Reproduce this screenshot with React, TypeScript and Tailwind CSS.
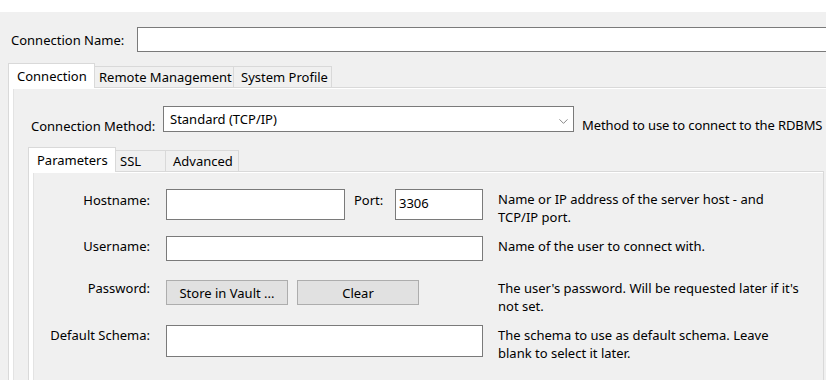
import { ChevronDown } from "lucide-react";

const field = "bg-white border border-[#7a7a7a] shrink-0";

const Tab = ({ label, active, w }: { label: string; active?: boolean; w: string }) => (
  <div
    className={
      active
        ? `${w} h-[25px] bg-white border-l border-t border-r border-[#d9d9d9] -mb-px relative z-10 pl-[8px] pt-[4px] whitespace-nowrap`
        : `${w} h-[21px] bg-[#f0f0f0] border-t border-r border-[#d9d9d9] pt-[2px] whitespace-nowrap`
    }
  >
    {label}
  </div>
);

const Desc = ({ children }: { children: React.ReactNode }) => (
  <div className="ml-[15px] w-[320px] mt-[1px] leading-[18px] whitespace-nowrap">{children}</div>
);

const App = () => {
  return (
    <div
      className="w-[826px] h-[380px] overflow-hidden bg-[#f0f0f0] text-[13px] leading-[16px] text-black"
      style={{ fontFamily: '"Noto Sans", sans-serif' }}
    >
      <div className="h-[12px] bg-white" />

      {/* connection name */}
      <div className="flex items-center mt-[15px] h-[25px]">
        <div className="w-[137px] shrink-0 pl-[11px] whitespace-nowrap">Connection Name:</div>
        <div className={`${field} w-[720px] h-[25px]`} />
      </div>

      {/* outer tabs */}
      <div className="flex items-end mt-[11px] ml-[8px]">
        <Tab label="Connection" active w="w-[87px]" />
        <Tab label="Remote Management" w="w-[139px] pl-[4px]" />
        <Tab label="System Profile" w="w-[98px] pl-[7px]" />
      </div>

      <div className="ml-[8px] w-[840px] h-[300px] border-l border-t border-[#d9d9d9]">
        <div className="h-full border-l-[4px] border-t-[1px] border-white">
          <div className="h-full border-l border-[#e3e3e3] bg-[#f0f0f0] pt-[17px]">
            {/* connection method */}
            <div className="flex items-start h-[25px]">
              <div className="w-[149px] shrink-0 pl-[17px] mt-[12px] whitespace-nowrap">Connection Method:</div>
              <div className={`${field} w-[411px] h-[26px] flex items-start justify-between pl-[6px] pr-[2px] pt-[4px]`}>
                <span>Standard (TCP/IP)</span>
                <ChevronDown className="w-[15px] h-[15px] mt-[3px] text-[#606060]" strokeWidth={1.2} />
              </div>
              <div className="pl-[8px] mt-[11px] whitespace-nowrap tracking-[-0.1px]">
                Method to use to connect to the RDBMS
              </div>
            </div>

            {/* inner tabs */}
            <div className="flex items-end mt-[16px] ml-[14px]">
              <Tab label="Parameters" active w="w-[88px]" />
              <Tab label="SSL" w="w-[50px] pl-[4px]" />
              <Tab label="Advanced" w="w-[73px] pl-[7px]" />
            </div>

            <div className="ml-[14px] w-[796px] h-[220px] border-l border-t border-r border-[#d9d9d9]">
              <div className="h-full border-l-[4px] border-t-[1px] border-white">
                <div className="h-full border-l border-[#e3e3e3] bg-[#f0f0f0] pt-[16px]">
                  {/* hostname */}
                  <div className="flex items-start h-[32px]">
                    <div className="w-[116px] shrink-0 text-right pt-[3px] whitespace-nowrap">Hostname:</div>
                    <div className={`${field} ml-[16px] w-[179px] h-[31px]`} />
                    <div className="w-[50px] shrink-0 pl-[9px] pt-[3px]">Port:</div>
                    <div className={`${field} w-[88px] h-[31px] pl-[3px] pt-[5px]`}>3306</div>
                    <Desc>
                      Name or IP address of the server host - and
                      <br />
                      TCP/IP port.
                    </Desc>
                  </div>

                  {/* username */}
                  <div className="flex items-start mt-[15px] h-[25px]">
                    <div className="w-[116px] shrink-0 text-right pt-[2px] whitespace-nowrap">Username:</div>
                    <div className={`${field} ml-[16px] w-[317px] h-[25px]`} />
                    <div className="ml-[15px] w-[320px] pt-[2px] whitespace-nowrap">Name of the user to connect with.</div>
                  </div>

                  {/* password */}
                  <div className="flex items-start mt-[17px] h-[32px]">
                    <div className="w-[116px] shrink-0 text-right pt-[2px] whitespace-nowrap">Password:</div>
                    <div className="ml-[16px] w-[317px] shrink-0 flex gap-[9px] mt-[2px]">
                      <button className="w-[122px] h-[25px] pt-px bg-[#e1e1e1] border border-[#adadad]">Store in Vault ...</button>
                      <button className="w-[122px] h-[25px] pt-px bg-[#e1e1e1] border border-[#adadad]">Clear</button>
                    </div>
                    <Desc>
                      The user's password. Will be requested later if it's
                      <br />
                      not set.
                    </Desc>
                  </div>

                  {/* default schema */}
                  <div className="flex items-start mt-[15px] h-[32px]">
                    <div className="w-[116px] shrink-0 text-right pt-[2px] whitespace-nowrap">Default Schema:</div>
                    <div className={`${field} ml-[16px] w-[317px] h-[32px]`} />
                    <Desc>
                      The schema to use as default schema. Leave
                      <br />
                      blank to select it later.
                    </Desc>
                  </div>
                </div>
              </div>
            </div>
          </div>
        </div>
      </div>
    </div>
  );
};

export default App;
